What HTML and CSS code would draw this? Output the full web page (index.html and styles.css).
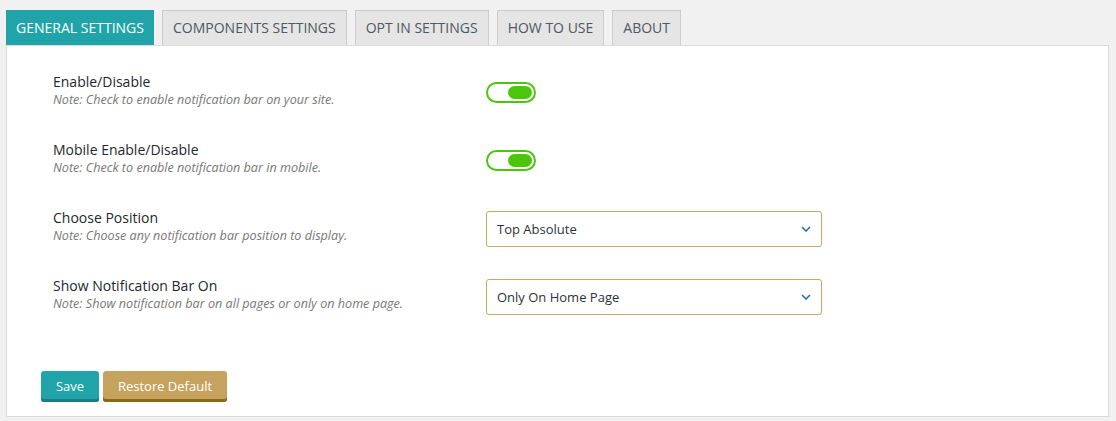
FILE: index.html
```html
<!DOCTYPE html>
<html lang="en">
<head>
    <meta charset="UTF-8">
    <title>Notification Bar Settings</title>
    <link rel="stylesheet" href="styles.css">
</head>
<body>
    <div class="wrap">
        <div class="tabs">
            <a class="tab active">GENERAL SETTINGS</a>
            <a class="tab">COMPONENTS SETTINGS</a>
            <a class="tab">OPT IN SETTINGS</a>
            <a class="tab">HOW TO USE</a>
            <a class="tab">ABOUT</a>
        </div>

        <div class="panel">
            <div class="row">
                <div class="label">
                    <h4>Enable/Disable</h4>
                    <p class="note">Note: Check to enable notification bar on your site.</p>
                </div>
                <div class="field"><span class="toggle on"><span class="knob"></span></span></div>
            </div>

            <div class="row">
                <div class="label">
                    <h4>Mobile Enable/Disable</h4>
                    <p class="note">Note: Check to enable notification bar in mobile.</p>
                </div>
                <div class="field"><span class="toggle on"><span class="knob"></span></span></div>
            </div>

            <div class="row">
                <div class="label">
                    <h4>Choose Position</h4>
                    <p class="note">Note: Choose any notification bar position to display.</p>
                </div>
                <div class="field">
                    <div class="select">
                        <span>Top Absolute</span>
                        <svg width="10" height="6" viewBox="0 0 10 6"><path d="M1 1l4 4 4-4" fill="none" stroke="#2271b1" stroke-width="1.6"/></svg>
                    </div>
                </div>
            </div>

            <div class="row">
                <div class="label">
                    <h4>Show Notification Bar On</h4>
                    <p class="note">Note: Show notification bar on all pages or only on home page.</p>
                </div>
                <div class="field">
                    <div class="select">
                        <span>Only On Home Page</span>
                        <svg width="10" height="6" viewBox="0 0 10 6"><path d="M1 1l4 4 4-4" fill="none" stroke="#2271b1" stroke-width="1.6"/></svg>
                    </div>
                </div>
            </div>

            <div class="actions">
                <button class="btn btn-save">Save</button>
                <button class="btn btn-restore">Restore Default</button>
            </div>
        </div>
    </div>
</body>
</html>
```

FILE: styles.css
```css
body {
    margin: 0;
    background: #f1f1f1;
    font-family: "Open Sans", sans-serif;
    color: #23282d;
}
.wrap {
    padding: 10px 7px 0 6px;
}
.tabs {
    display: flex;
    gap: 8px;
}
.tab {
    display: block;
    height: 35px;
    line-height: 34px;
    padding: 0 10px;
    background: #e5e5e5;
    border: 1px solid #ccc;
    border-bottom: none;
    color: #50575e;
    font-size: 14px;
    box-sizing: border-box;
}
.tab.active {
    background: #21a4a9;
    border: none;
    width: 148px;
    padding: 0;
    text-align: center;
    line-height: 35px;
    color: #fff;
}
.panel {
    background: #fff;
    border: 1px solid #dcdcdc;
    padding: 26px 0 13px 34px;
    height: 372px;
    box-sizing: border-box;
}
.row {
    display: flex;
    align-items: center;
    height: 68px;
}
.label {
    width: 433px;
    padding-left: 12px;
    align-self: flex-start;
}
.label h4 {
    margin: 0;
    font-size: 14px;
    font-weight: 400;
    line-height: 19px;
}
.note {
    margin: 0;
    font-size: 12.6px;
    font-style: italic;
    color: #777;
    line-height: 17px;
}
.field {
    align-self: flex-start;
}
.row:nth-child(1) .field,
.row:nth-child(2) .field {
    padding-top: 10px;
}
.row:nth-child(3) .field,
.row:nth-child(4) .field {
    padding-top: 8px;
    margin-top: -5px;
}
.toggle {
    display: block;
    width: 50px;
    height: 21px;
    border: 2px solid #4cc60c;
    border-radius: 11px;
    box-sizing: border-box;
    position: relative;
}
.toggle .knob {
    position: absolute;
    right: 2px;
    top: 2px;
    width: 24px;
    height: 13px;
    border-radius: 7px;
    background: #4cc60c;
}
.select {
    width: 336px;
    height: 36px;
    border: 1px solid #c9a85f;
    border-radius: 3px;
    box-sizing: border-box;
    display: flex;
    align-items: center;
    justify-content: space-between;
    padding: 0 10px 0 10px;
    font-size: 13px;
    color: #2c3338;
}
.actions {
    display: flex;
    gap: 4px;
    margin-top: 27px;
}
.btn {
    font-family: "Open Sans", sans-serif;
    font-size: 13px;
    color: #fff;
    border: none;
    border-radius: 3px;
    height: 31px;
    padding: 0 14px 2px;
    cursor: pointer;
}
.btn-save {
    background: #21a4a9;
    box-shadow: inset 0 -3px 0 #1a7f82;
    width: 58px;
}
.btn-restore {
    background: #c5a35e;
    box-shadow: inset 0 -3px 0 #8c6716;
    width: 124px;
}
```
